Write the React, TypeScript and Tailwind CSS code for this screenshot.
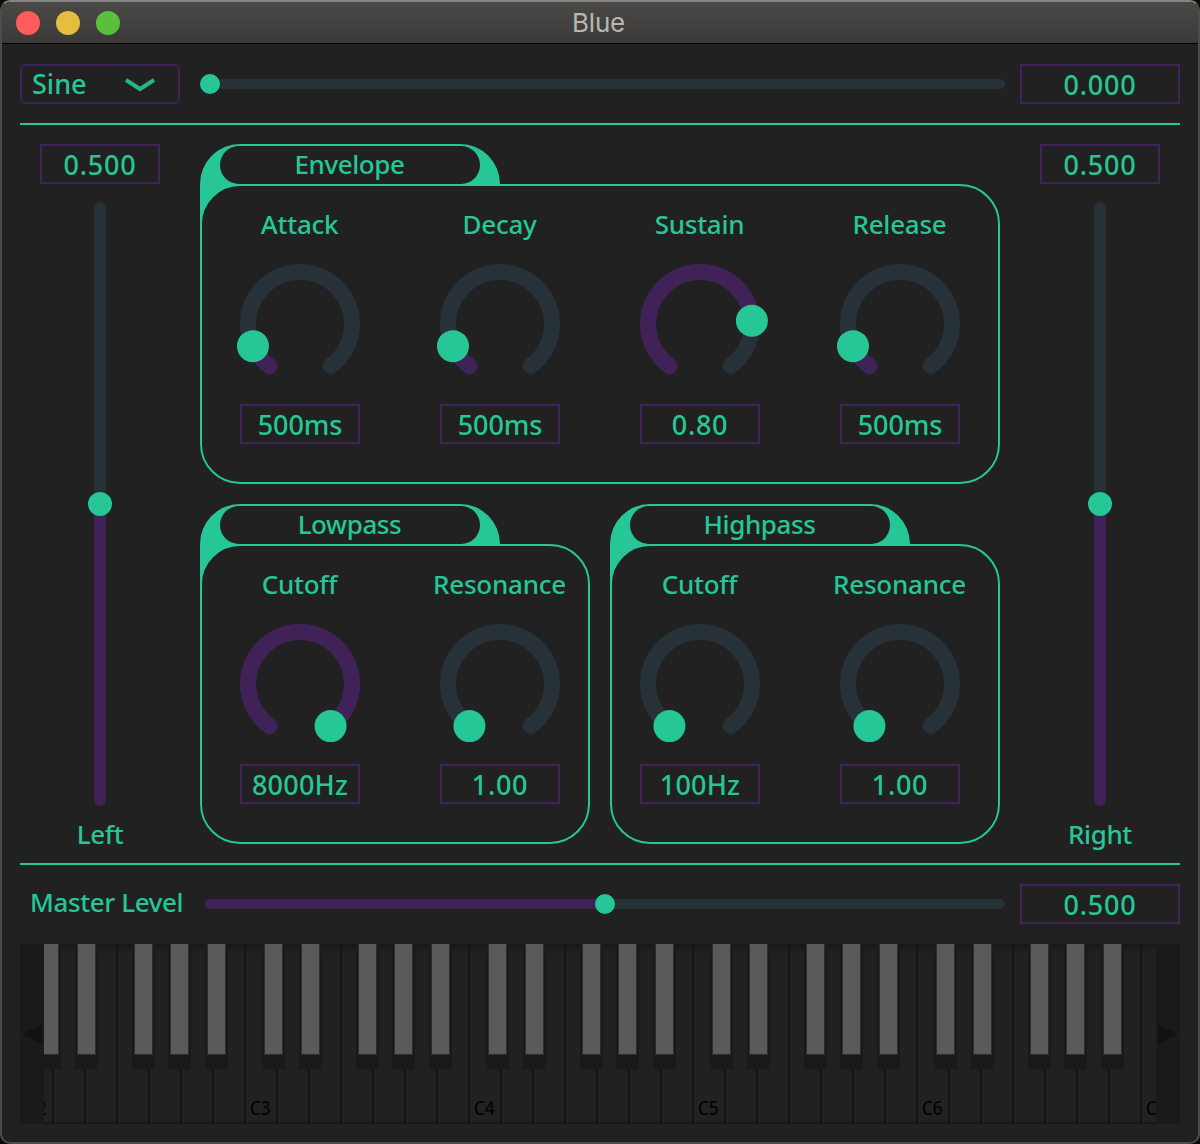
type KnobProps = { label: string; value: string; amount: number; tracking?: string };

function ValueBox({ value, className }: { value: string; className: string }) {
  return (
    <div
      className={`flex h-10 shrink-0 items-center justify-center border-2 border-[#3f2359] text-[27px] ${className}`}
    >
      <span>{value}</span>
    </div>
  );
}

function pointAt(amount: number) {
  const a = ((36 + 288 * amount) * Math.PI) / 180;
  return { x: 70 - 52 * Math.sin(a), y: 70 + 52 * Math.cos(a) };
}

function arc(from: number, to: number) {
  const p = pointAt(from);
  const q = pointAt(to);
  const large = (to - from) * 288 > 180 ? 1 : 0;
  return `M${p.x} ${p.y}A52 52 0 ${large} 1 ${q.x} ${q.y}`;
}

function Knob({ label, value, amount, tracking = "tracking-[0.2px]" }: KnobProps) {
  const thumb = pointAt(amount);
  return (
    <div className="flex w-[200px] shrink-0 flex-col items-center">
      <div className="flex h-10 items-center pr-px">{label}</div>
      <svg className="my-[10px] h-[140px] w-[140px]" viewBox="0 0 140 140" fill="none">
        <path d={arc(0, 1)} stroke="#263238" strokeWidth="16" strokeLinecap="round" />
        {amount > 0 && <path d={arc(0, amount)} stroke="#402158" strokeWidth="16" strokeLinecap="round" />}
        <circle cx={thumb.x} cy={thumb.y} r="16" fill="#26c697" />
      </svg>
      <ValueBox value={value} className={`w-[120px] ${tracking}`} />
    </div>
  );
}

type PanelProps = { title: string; knobs: KnobProps[]; className: string; knobOffset?: string };

function Panel({ title, knobs, className, knobOffset = "-ml-0.5" }: PanelProps) {
  return (
    <section className={`flex flex-col ${className}`}>
      <div className="flex h-10 w-[300px] justify-center rounded-t-[40px] bg-[#26c697] pt-0.5">
        <div className="flex h-[38px] w-[260px] items-center justify-center rounded-[19px] bg-[#212121] pr-px pb-0.5 tracking-[-0.4px]">
          {title}
        </div>
      </div>
      <div className="flex-1 bg-[linear-gradient(#26c697,#26c697)] bg-[length:40px_40px] bg-no-repeat">
        <div className="h-full rounded-[40px] border-2 border-[#26c697] bg-[#212121] pt-[18px]">
          <div className={`flex ${knobOffset}`}>
            {knobs.map((k, i) => (
              <Knob key={i} {...k} />
            ))}
          </div>
        </div>
      </div>
    </section>
  );
}

function LevelColumn({ label }: { label: string }) {
  return (
    <div className="flex w-40 flex-col items-center">
      <ValueBox value="0.500" className="w-[120px] tracking-[0.8px]" />
      <div className="mt-[18px] flex h-[604px] w-3 flex-col items-center justify-center rounded-full bg-linear-to-b from-[#263238] from-50% to-[#402158] to-50%">
        <div className="h-6 w-6 shrink-0 rounded-full bg-[#26c697]" />
      </div>
      <div className="mt-2 flex h-10 items-center tracking-[-0.4px]">{label}</div>
    </div>
  );
}

const blackKeys = ["left-[18px]", "left-[55px]", "left-[112px]", "left-[148px]", "left-[185px]"];

function Octave({ number }: { number: number }) {
  return (
    <div className="relative flex h-full w-56 shrink-0">
      {[0, 1, 2, 3, 4, 5, 6].map((n) => (
        <div
          key={n}
          className="flex w-8 items-end border-b-2 border-l-2 border-b-[#181818] border-l-[#141414] pb-[3px] pl-1"
        >
          {n === 0 && (
            <span className="origin-left scale-x-[0.86] text-[20px] leading-[22px] font-normal tracking-normal text-black">
              C{number}
            </span>
          )}
        </div>
      ))}
      {number < 7 &&
        blackKeys.map((left) => (
          <div key={left} className={`absolute top-0 h-[126px] w-[23px] bg-[#1a1a1a] px-[2px] ${left}`}>
            <div className="h-[111px] border-x border-b border-[#2e2e2e] bg-[#5a5a5a] bg-clip-padding" />
          </div>
        ))}
    </div>
  );
}

function Keyboard() {
  return (
    <div className="flex h-[180px] bg-[#1a1a1a]">
      <div className="flex w-6 items-center justify-center">
        <svg className="h-5 w-5" viewBox="0 0 20 20" fill="#121212">
          <path d="M20 0V20L0 10Z" />
        </svg>
      </div>
      <div className="flex-1 overflow-hidden bg-[linear-gradient(#191919,#212121_10px)]">
        <div className="-ml-6 flex h-full">
          {[2, 3, 4, 5, 6, 7].map((n) => (
            <Octave key={n} number={n} />
          ))}
        </div>
      </div>
      <div className="flex w-6 items-center justify-center">
        <svg className="h-5 w-5" viewBox="0 0 20 20" fill="#121212">
          <path d="M0 0V20L20 10Z" />
        </svg>
      </div>
    </div>
  );
}

export default function App() {
  return (
    <div className="h-[1144px] w-[1200px] bg-[#0c0a0b]">
      <div className="flex h-full flex-col overflow-hidden rounded-[10px] border-2 border-[#4c4c4c] border-t-[#858483] bg-[#212121] font-['Noto_Sans',sans-serif] text-[26px] leading-none font-medium tracking-[-0.25px] text-[#26c697]">
        <header className="grid h-[42px] shrink-0 grid-cols-[1fr_auto_1fr] items-center border-b border-black bg-linear-to-b from-[#4b4946] to-[#3c3a38] px-[14px]">
          <div className="flex gap-4">
            <span className="h-6 w-6 rounded-full bg-[#ff5c5a]" />
            <span className="h-6 w-6 rounded-full bg-[#e6be3d]" />
            <span className="h-6 w-6 rounded-full bg-[#5ac03b]" />
          </div>
          <h1 className="pr-[3px] font-['Inter',sans-serif] text-[26px] font-normal text-[#b8b6b4]">Blue</h1>
        </header>

        <main className="flex flex-1 flex-col px-[18px] pt-5">
          <div className="flex h-10 items-center">
            <button className="flex h-10 w-40 items-center rounded-md border-2 border-[#3f2359] pl-[10px] text-[27px] tracking-normal">
              <span className="w-[93px] pb-0.5 text-left">Sine</span>
              <svg className="mt-0.5 h-[14px] w-[30px]" viewBox="0 0 30 14" fill="none" stroke="#26b48c" strokeWidth="4">
                <path d="M1 2L15 11L29 2" />
              </svg>
            </button>
            <div className="ml-[25px] flex h-[10px] w-[800px] items-center rounded-full bg-[#263238]">
              <div className="-ml-[5px] h-5 w-5 rounded-full bg-[#26c697]" />
            </div>
            <ValueBox value="0.000" className="ml-[15px] w-40 tracking-[0.8px]" />
          </div>

          <div className="mt-[19px] h-0.5 bg-[#26c697]" />

          <div className="mt-[19px] flex h-[710px] gap-5">
            <LevelColumn label="Left" />
            <div className="flex w-[800px] flex-col gap-5">
              <Panel
                title="Envelope"
                className="h-[340px] w-full"
                knobs={[
                  { label: "Attack", value: "500ms", amount: 0.1, tracking: "tracking-[-0.1px]" },
                  { label: "Decay", value: "500ms", amount: 0.1, tracking: "tracking-[-0.1px]" },
                  { label: "Sustain", value: "0.80", amount: 0.8, tracking: "tracking-[0.7px]" },
                  { label: "Release", value: "500ms", amount: 0.1, tracking: "tracking-[-0.1px]" },
                ]}
              />
              <div className="flex gap-5">
                <Panel
                  title="Lowpass"
                  className="h-[340px] w-[390px]"
                  knobs={[
                    { label: "Cutoff", value: "8000Hz", amount: 1 },
                    { label: "Resonance", value: "1.00", amount: 0, tracking: "tracking-[0.7px]" },
                  ]}
                />
                <Panel
                  title="Highpass"
                  className="h-[340px] w-[390px]"
                  knobOffset="-ml-3"
                  knobs={[
                    { label: "Cutoff", value: "100Hz", amount: 0 },
                    { label: "Resonance", value: "1.00", amount: 0, tracking: "tracking-[0.7px]" },
                  ]}
                />
              </div>
            </div>
            <LevelColumn label="Right" />
          </div>

          <div className="mt-[9px] h-0.5 bg-[#26c697]" />

          <div className="mt-[19px] flex h-10 items-center">
            <div className="w-[185px] pb-1 pl-[10px] tracking-[-0.4px]">Master Level</div>
            <div className="flex h-[10px] w-[800px] items-center justify-center rounded-full bg-linear-to-r from-[#402158] from-50% to-[#263238] to-50%">
              <div className="h-5 w-5 rounded-full bg-[#26c697]" />
            </div>
            <ValueBox value="0.500" className="ml-[15px] w-40 tracking-[0.8px]" />
          </div>

          <div className="mt-5">
            <Keyboard />
          </div>
        </main>
      </div>
    </div>
  );
}
